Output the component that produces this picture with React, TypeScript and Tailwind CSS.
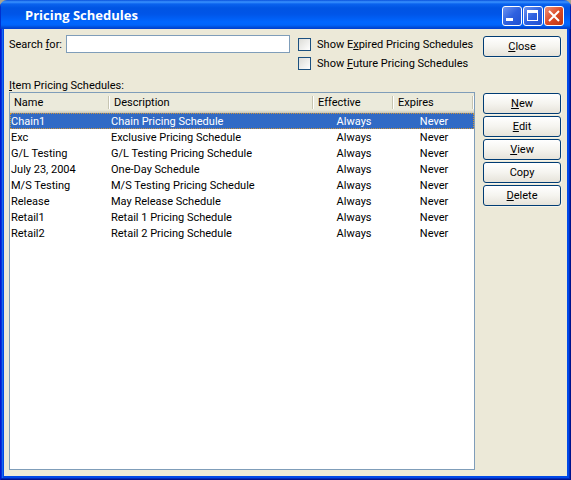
import type { ReactNode } from "react";

const schedules = [
  { name: "Chain1", description: "Chain Pricing Schedule" },
  { name: "Exc", description: "Exclusive Pricing Schedule" },
  { name: "G/L Testing", description: "G/L Testing Pricing Schedule" },
  { name: "July 23, 2004", description: "One-Day Schedule" },
  { name: "M/S Testing", description: "M/S Testing Pricing Schedule" },
  { name: "Release", description: "May Release Schedule" },
  { name: "Retail1", description: "Retail 1 Pricing Schedule" },
  { name: "Retail2", description: "Retail 2 Pricing Schedule" },
];

function CommandButton({ children }: { children: ReactNode }) {
  return (
    <button
      type="button"
      className="h-[21px] w-full rounded-[3px] border border-[#003c74] bg-linear-to-b from-white via-[#f5f4ef] to-[#e6e3da] text-center leading-[18px] shadow-[1px_1px_0_#f6f4ea]"
    >
      {children}
    </button>
  );
}

function CheckOption({ id, children }: { id: string; children: ReactNode }) {
  return (
    <div className="flex h-[19px] items-center gap-[6px]">
      <input
        id={id}
        type="checkbox"
        className="size-[13px] shrink-0 appearance-none border border-[#1c5180] bg-linear-to-br from-[#dcdcd7] to-white"
      />
      <label htmlFor={id} className="whitespace-nowrap">
        {children}
      </label>
    </div>
  );
}

function CaptionButton({ label, danger = false, children }: { label: string; danger?: boolean; children: ReactNode }) {
  return (
    <button
      type="button"
      aria-label={label}
      className={
        danger
          ? "size-5 rounded-[3px] border border-white bg-linear-to-br from-[#ee8f75] via-[#dc4a25] to-[#bd3510]"
          : "size-5 rounded-[3px] border border-white bg-linear-to-br from-[#6d93ef] via-[#2f61e0] to-[#1f50d2]"
      }
    >
      <svg viewBox="0 0 18 18" className="size-[18px]" shapeRendering="crispEdges">
        {children}
      </svg>
    </button>
  );
}

function HeaderCell({ children }: { children: ReactNode }) {
  return (
    <th scope="col" className="h-5 p-0 text-left font-normal">
      <div className="mb-[1px] h-[13px] border-r border-white">
        <div className="h-[13px] border-r border-[#c7c5b2] pl-1 leading-[13px]">{children}</div>
      </div>
    </th>
  );
}

export default function App() {
  return (
    <div className="min-h-screen bg-[#a9a48f] font-[Roboto,'Liberation_Sans',Arial,sans-serif] text-[11px] leading-[13px] text-black">
      <div className="flex min-h-screen flex-col overflow-hidden rounded-t-[7px]">
        <header className="flex h-[29px] items-center justify-between bg-[linear-gradient(180deg,#0850dc_0,#3a93ff_2px,#0a62ee_4px,#0054e3_8px,#0055e8_14px,#0066ff_22px,#0064fb_25px,#0046cf_28px,#003dd7_29px)] pr-[7px] pl-[25px] shadow-[inset_1px_0_#0030d0,inset_-1px_0_#0020b0]">
          <h1 className="font-['Open_Sans','Noto_Sans',sans-serif] text-[13px] leading-[18px] font-bold text-white">
            Pricing Schedules
          </h1>
          <div className="flex gap-[1px] pt-[3px]">
            <CaptionButton label="Minimize">
              <rect x="3" y="11" width="7" height="3" fill="white" />
            </CaptionButton>
            <CaptionButton label="Maximize">
              <path d="M3 3h11v11H3zM4 6v7h9V6z" fill="white" fillRule="evenodd" />
            </CaptionButton>
            <CaptionButton label="Close window" danger>
              <path d="M4 4l10 10M14 4L4 14" stroke="white" strokeWidth="2" shapeRendering="auto" />
            </CaptionButton>
          </div>
        </header>

        <div className="flex grow bg-[#0048e8] px-1 pb-1 shadow-[inset_1px_0_#0019cf,inset_-1px_-1px_#00138c,inset_-2px_-2px_#0029b9,inset_2px_0_#0831d9,inset_3px_0_#166aee]">
          <div className="flex min-w-0 grow bg-[#ece9d8] pt-[6px] pr-[6px] pb-[6px] pl-[5px]">
            <main className="flex min-w-0 grow flex-col">
              <div className="flex h-11 items-start">
                <label htmlFor="search" className="w-[57px] shrink-0 pt-[3px] whitespace-nowrap">
                  Search <u>f</u>or:
                </label>
                <input
                  id="search"
                  type="text"
                  className="h-[18px] min-w-0 grow border border-[#7f9db9] bg-white px-1 outline-none"
                />
                <div className="w-[185px] shrink-0 pl-2">
                  <CheckOption id="expired">
                    Show E<u>x</u>pired Pricing Schedules
                  </CheckOption>
                  <CheckOption id="future">
                    Show <u>F</u>uture Pricing Schedules
                  </CheckOption>
                </div>
              </div>
              <h2 id="list-title" className="h-[13px]">
                <u>I</u>tem Pricing Schedules:
              </h2>
              <div className="grow border border-[#7f9db9] bg-white">
                <table aria-labelledby="list-title" className="w-full table-fixed border-collapse">
                  <colgroup>
                    <col className="w-[100px]" />
                    <col />
                    <col className="w-20" />
                    <col className="w-20" />
                  </colgroup>
                  <thead className="bg-[linear-gradient(180deg,#ebeadb_17px,#cbc7b8_20px)]">
                    <tr>
                      <HeaderCell>Name</HeaderCell>
                      <HeaderCell>Description</HeaderCell>
                      <HeaderCell>Effective</HeaderCell>
                      <HeaderCell>Expires</HeaderCell>
                    </tr>
                  </thead>
                  <tbody>
                    {schedules.map((schedule, index) => (
                      <tr
                        key={schedule.name}
                        aria-selected={index === 0}
                        className={
                          index === 0
                            ? "h-4 bg-[#316ac5] text-white outline-1 -outline-offset-1 outline-dotted outline-[#ce953a]"
                            : "h-4"
                        }
                      >
                        <td className="p-0 pl-[1px]">{schedule.name}</td>
                        <td className="p-0 pl-[1px]">{schedule.description}</td>
                        <td className="p-0 text-center">Always</td>
                        <td className="p-0 text-center">Never</td>
                      </tr>
                    ))}
                  </tbody>
                </table>
              </div>
            </main>

            <aside className="ml-2 flex w-[78px] shrink-0 flex-col gap-[2px] pt-[1px]">
              <div className="mb-[34px]">
                <CommandButton>
                  <u>C</u>lose
                </CommandButton>
              </div>
              <CommandButton>
                <u>N</u>ew
              </CommandButton>
              <CommandButton>
                <u>E</u>dit
              </CommandButton>
              <CommandButton>
                <u>V</u>iew
              </CommandButton>
              <CommandButton>Copy</CommandButton>
              <CommandButton>
                <u>D</u>elete
              </CommandButton>
            </aside>
          </div>
        </div>
      </div>
    </div>
  );
}
